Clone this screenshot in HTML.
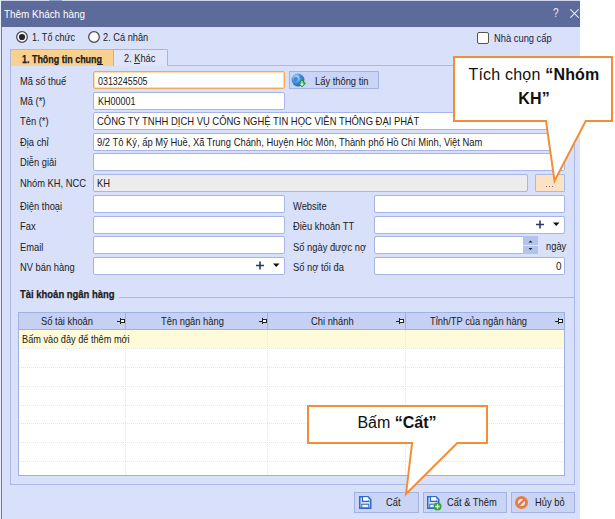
<!DOCTYPE html>
<html><head><meta charset="utf-8">
<style>
html,body{margin:0;padding:0;}
body{width:615px;height:519px;overflow:hidden;position:relative;background:#fff;font-family:"Liberation Sans",sans-serif;}
.a{position:absolute;box-sizing:border-box;}
.t{position:absolute;font-size:11px;line-height:13px;white-space:nowrap;transform-origin:0 0;transform:scaleX(.85);color:#202020;}
.in{position:absolute;box-sizing:border-box;height:18px;background:#fff;border:1px solid #a6b5e6;border-radius:2px;}
.btn{position:absolute;box-sizing:border-box;background:#cad4f5;border:1px solid #a3b2e4;}
</style></head><body>
<!-- top strip -->
<div class="a" style="left:0;top:0;width:580px;height:1px;background:#cfd6ee"></div>
<!-- window -->
<div class="a" style="left:0;top:1px;width:580px;height:518px;background:#d9e0fa"></div>
<div class="a" style="left:1px;top:1px;width:1px;height:518px;background:#6c7bab"></div>
<!-- title bar -->
<div class="a" style="left:1px;top:1px;width:579px;height:26px;background:#5d6b9b"></div>
<div class="a" style="left:0;top:0;width:1px;height:519px;background:#e9ecf9"></div>
<div class="a" style="left:49px;top:0;width:13px;height:1px;background:#8ea3c9"></div>
<div class="t" style="left:4px;top:8px;color:#fff;transform:scaleX(.9)">Thêm Khách hàng</div>
<div class="t" style="left:553px;top:7px;color:#e8ecf8;font-size:12px">?</div>
<svg class="a" style="left:570px;top:9px" width="9" height="9"><path d="M0.3 0.3L8.7 8.7M8.7 0.3L0.3 8.7" stroke="#e6eaf6" stroke-width="1.05"/></svg>

<!-- radios -->
<svg class="a" style="left:16px;top:31px" width="12" height="12"><circle cx="6" cy="6" r="5.3" fill="#fff" stroke="#4d4d4d" stroke-width="1.3"/><circle cx="6" cy="6" r="3.1" fill="#262630"/></svg>
<div class="t" style="left:32px;top:31px;transform:scaleX(.82)">1. Tổ chức</div>
<svg class="a" style="left:88px;top:31px" width="12" height="12"><circle cx="6" cy="6" r="5.3" fill="#fff" stroke="#4d4d4d" stroke-width="1.3"/></svg>
<div class="t" style="left:103px;top:31px;transform:scaleX(.84)">2. Cá nhân</div>
<div class="a" style="left:477px;top:32px;width:12px;height:12px;background:#fff;border:1.4px solid #555;border-radius:2px"></div>
<div class="t" style="left:494px;top:32px;color:#1d1d3a">Nhà cung cấp</div>

<!-- tabs -->
<div class="a" style="left:10px;top:49px;width:103px;height:17px;background:#f8d18f;border-top:1px solid #a9b8e6;border-left:1px solid #a9b8e6"></div>
<div class="t" style="left:22px;top:53px;font-weight:bold;transform:scaleX(.813);-webkit-text-stroke:.25px #202020">1. Thông tin chung</div>
<div class="a" style="left:113px;top:49px;width:55px;height:17px;background:#e0e5fa;border:1px solid #a3b3e4;border-bottom:none;border-top-right-radius:2px"></div>
<div class="t" style="left:124px;top:52px;transform:scaleX(.84)">2. Khác</div>
<div class="a" style="left:134px;top:63px;width:6px;height:1px;background:#333"></div>
<div class="a" style="left:97px;top:64px;width:6px;height:1px;background:#222"></div>

<!-- panel -->
<div class="a" style="left:10px;top:65px;width:565px;height:420px;border:1px solid #a9b8e6;border-top:none"></div>
<div class="a" style="left:168px;top:65px;width:407px;height:1px;background:#a9b8e6"></div>

<!-- labels -->
<div class="t" style="left:20px;top:75px">Mã số thuế</div>
<div class="t" style="left:20px;top:95px">Mã (*)</div>
<div class="t" style="left:20px;top:115px">Tên (*)</div>
<div class="t" style="left:20px;top:136px">Địa chỉ</div>
<div class="t" style="left:20px;top:156px">Diễn giải</div>
<div class="t" style="left:20px;top:177px">Nhóm KH, NCC</div>
<div class="t" style="left:20px;top:200px">Điện thoại</div>
<div class="t" style="left:20px;top:220px">Fax</div>
<div class="t" style="left:20px;top:241px">Email</div>
<div class="t" style="left:20px;top:261px">NV bán hàng</div>
<div class="t" style="left:293px;top:200px">Website</div>
<div class="t" style="left:293px;top:220px">Điều khoản TT</div>
<div class="t" style="left:293px;top:241px">Số ngày được nợ</div>
<div class="t" style="left:293px;top:261px">Số nợ tối đa</div>

<!-- inputs -->
<div class="in" style="left:93px;top:71px;width:192px;border-color:#f2ab55;box-shadow:inset 0 0 0 1px #fcdcaa"></div>
<div class="t" style="left:98px;top:75px;transform:scaleX(.81)">0313245505</div>
<div class="btn" style="left:289px;top:71px;width:90px;height:18px"></div>
<svg class="a" style="left:291px;top:73px" width="16" height="16">
 <defs><radialGradient id="g1" cx="0.38" cy="0.32" r="0.75"><stop offset="0" stop-color="#cdeeff"/><stop offset="0.45" stop-color="#4a9be0"/><stop offset="1" stop-color="#1d56b0"/></radialGradient></defs>
 <circle cx="7" cy="7" r="6.4" fill="url(#g1)"/>
 <path d="M3 4.5Q5 3 6.5 4.5T5.5 8Q3.5 9 2.8 7Z" fill="#2a6cc0" opacity=".7"/>
 <path d="M8 2.5Q10.5 2.5 11.5 4.5L9.5 5.5Z" fill="#2a6cc0" opacity=".6"/>
 <path d="M11 6.8L14.6 10.4L11 14L7.4 10.4Z" fill="#2eab3c" stroke="#1f8a2c" stroke-width=".6"/>
 <path d="M11 8.3V12M9.6 10.8L11 12.3L12.4 10.8" stroke="#eaffea" stroke-width="1.1" fill="none"/>
</svg>
<div class="t" style="left:315px;top:75px">Lấy thông tin</div>

<div class="in" style="left:93px;top:92px;width:192px"></div>
<div class="t" style="left:98px;top:95px;transform:scaleX(.815)">KH00001</div>
<div class="in" style="left:93px;top:112px;width:472px"></div>
<div class="t" style="left:97px;top:115px;transform:scaleX(.858)">CÔNG TY TNHH DỊCH VỤ CÔNG NGHỆ TIN HỌC VIỄN THÔNG ĐẠI PHÁT</div>
<div class="in" style="left:93px;top:133px;width:472px"></div>
<div class="t" style="left:97px;top:136px;transform:scaleX(.854)">9/2 Tô Ký, ấp Mỹ Huề, Xã Trung Chánh, Huyện Hóc Môn, Thành phố Hồ Chí Minh, Việt Nam</div>
<div class="in" style="left:93px;top:153px;width:472px"></div>
<div class="in" style="left:93px;top:174px;width:435px;background:#ececec"></div>
<div class="t" style="left:97px;top:177px">KH</div>
<div class="a" style="left:535px;top:174px;width:30px;height:18px;background:#fae3c2;border:1px solid #a9b8e6;border-radius:1px"></div>
<div class="a" style="left:546px;top:186px;width:1px;height:1px;background:#8a5a8a"></div><div class="a" style="left:549px;top:186px;width:1px;height:1px;background:#8a5a8a"></div><div class="a" style="left:552px;top:186px;width:1px;height:1px;background:#8a5a8a"></div>

<div class="in" style="left:93px;top:195px;width:192px"></div>
<div class="in" style="left:93px;top:216px;width:192px"></div>
<div class="in" style="left:93px;top:236px;width:192px"></div>
<div class="in" style="left:93px;top:257px;width:192px"></div>
<svg class="a" style="left:256px;top:261px" width="25" height="9"><path d="M4 0.5V8.5M0 4.5H8" stroke="#2a3a6a" stroke-width="1.6"/><path d="M17 2.5H23.5L20.25 6Z" fill="#111"/></svg>

<div class="in" style="left:374px;top:195px;width:191px"></div>
<div class="in" style="left:374px;top:216px;width:191px"></div>
<svg class="a" style="left:536px;top:220px" width="25" height="9"><path d="M4 0.5V8.5M0 4.5H8" stroke="#2a3a6a" stroke-width="1.6"/><path d="M17 2.5H23.5L20.25 6Z" fill="#111"/></svg>
<div class="in" style="left:374px;top:236px;width:164px"></div>
<div class="a" style="left:523px;top:236px;width:15px;height:18px;background:#b3c4ea"></div>
<div class="a" style="left:523px;top:245px;width:15px;height:1px;background:#dfe6f9"></div>
<svg class="a" style="left:527px;top:239px" width="7" height="13"><path d="M1.5 3.5H5.5L3.5 1.5Z" fill="#1a1a2a"/><path d="M1.5 9H5.5L3.5 11Z" fill="#1a1a2a"/></svg>
<div class="t" style="left:546px;top:240px">ngày</div>
<div class="in" style="left:374px;top:257px;width:191px"></div>
<div class="t" style="left:556px;top:260px;transform:scaleX(.9)">0</div>

<!-- group -->
<div class="t" style="left:20px;top:288px;font-weight:bold;transform:scaleX(.86);-webkit-text-stroke:.25px #202020">Tài khoản ngân hàng</div>
<div class="a" style="left:119px;top:297px;width:455px;height:1px;background:#a9b8e6"></div>

<!-- grid -->
<div class="a" style="left:18px;top:312px;width:547px;height:164px;background:#fff;border:1px solid #9fb0e2"></div>
<div class="a" style="left:19px;top:313px;width:545px;height:17px;background:#c5d0f3;border-bottom:1px solid #9fb0e2"></div>
<div class="a" style="left:19px;top:330px;width:545px;height:18px;background:#fffbd9"></div>
<div id="rows"></div>
<div class="a" style="left:125px;top:313px;width:1px;height:17px;background:#9fb0e2"></div>
<div class="a" style="left:267px;top:313px;width:1px;height:17px;background:#9fb0e2"></div>
<div class="a" style="left:405px;top:313px;width:1px;height:17px;background:#9fb0e2"></div>
<div class="a" style="left:125px;top:330px;width:1px;height:145px;background:repeating-linear-gradient(180deg,#e6e6e6 0 1px,transparent 1px 2px)"></div>
<div class="a" style="left:267px;top:330px;width:1px;height:145px;background:repeating-linear-gradient(180deg,#e6e6e6 0 1px,transparent 1px 2px)"></div>
<div class="a" style="left:405px;top:330px;width:1px;height:145px;background:repeating-linear-gradient(180deg,#e6e6e6 0 1px,transparent 1px 2px)"></div>
<div class="a" style="left:19px;top:348px;width:545px;height:1px;background:repeating-linear-gradient(90deg,#e6e6e6 0 1px,transparent 1px 2px)"></div>
<div class="a" style="left:19px;top:367px;width:545px;height:1px;background:repeating-linear-gradient(90deg,#e6e6e6 0 1px,transparent 1px 2px)"></div>
<div class="a" style="left:19px;top:386px;width:545px;height:1px;background:repeating-linear-gradient(90deg,#e6e6e6 0 1px,transparent 1px 2px)"></div>
<div class="a" style="left:19px;top:405px;width:545px;height:1px;background:repeating-linear-gradient(90deg,#e6e6e6 0 1px,transparent 1px 2px)"></div>
<div class="a" style="left:19px;top:423px;width:545px;height:1px;background:repeating-linear-gradient(90deg,#e6e6e6 0 1px,transparent 1px 2px)"></div>
<div class="a" style="left:19px;top:442px;width:545px;height:1px;background:repeating-linear-gradient(90deg,#e6e6e6 0 1px,transparent 1px 2px)"></div>
<div class="a" style="left:19px;top:461px;width:545px;height:1px;background:repeating-linear-gradient(90deg,#e6e6e6 0 1px,transparent 1px 2px)"></div>
<div class="t" style="left:41px;top:315px">Số tài khoản</div>
<div class="t" style="left:161px;top:315px">Tên ngân hàng</div>
<div class="t" style="left:311px;top:315px">Chi nhánh</div>
<div class="t" style="left:430px;top:315px">Tỉnh/TP của ngân hàng</div>
<svg class="a" style="left:116px;top:317px" width="10" height="8"><path d="M1 4.5H4M4.5 1V7" stroke="#222" stroke-width="1" fill="none"/><rect x="4.5" y="2.5" width="4" height="3" fill="#fff" stroke="#222" stroke-width="1"/></svg>
<svg class="a" style="left:258px;top:317px" width="10" height="8"><path d="M1 4.5H4M4.5 1V7" stroke="#222" stroke-width="1" fill="none"/><rect x="4.5" y="2.5" width="4" height="3" fill="#fff" stroke="#222" stroke-width="1"/></svg>
<svg class="a" style="left:395px;top:317px" width="10" height="8"><path d="M1 4.5H4M4.5 1V7" stroke="#222" stroke-width="1" fill="none"/><rect x="4.5" y="2.5" width="4" height="3" fill="#fff" stroke="#222" stroke-width="1"/></svg>
<svg class="a" style="left:554px;top:317px" width="10" height="8"><path d="M1 4.5H4M4.5 1V7" stroke="#222" stroke-width="1" fill="none"/><rect x="4.5" y="2.5" width="4" height="3" fill="#fff" stroke="#222" stroke-width="1"/></svg>
<div class="t" style="left:22px;top:333px;transform:scaleX(.835)">Bấm vào đây để thêm mới</div>

<!-- buttons -->
<div class="btn" style="left:354px;top:492px;width:65px;height:21px"></div>
<div class="t" style="left:386px;top:496px">Cất</div>
<div class="btn" style="left:423px;top:492px;width:84px;height:21px"></div>
<div class="t" style="left:447px;top:496px">Cất &amp; Thêm</div>
<div class="btn" style="left:511px;top:492px;width:64px;height:21px"></div>
<div class="t" style="left:535px;top:496px">Hủy bỏ</div>
<svg class="a" style="left:358px;top:495px" width="15" height="15"><path d="M1.75 1.75H10L12.75 4.5V13.25H1.75Z" fill="#d6def8" stroke="#2f6bc9" stroke-width="1.5"/><path d="M4.5 1.5V6.25H11.5" fill="none" stroke="#2f6bc9" stroke-width="1.3"/><rect x="5.2" y="2.2" width="4.6" height="3.3" fill="#fff"/><rect x="3.75" y="9.25" width="7" height="3.5" fill="#eef2ff" stroke="#2f6bc9" stroke-width="1"/></svg>
<svg class="a" style="left:426px;top:495px" width="16" height="16"><path d="M1.75 1.75H10L12.75 4.5V13.25H1.75Z" fill="#d6def8" stroke="#2f6bc9" stroke-width="1.5"/><path d="M4.5 1.5V6.25H11.5" fill="none" stroke="#2f6bc9" stroke-width="1.3"/><rect x="5.2" y="2.2" width="4.6" height="3.3" fill="#fff"/><rect x="3.75" y="9.25" width="5" height="3.5" fill="#eef2ff" stroke="#2f6bc9" stroke-width="1"/><circle cx="11.5" cy="11.5" r="4" fill="#2ea83a"/><path d="M11.5 9.3V13.7M9.3 11.5H13.7" stroke="#dff5df" stroke-width="1.3"/></svg>
<svg class="a" style="left:515px;top:496px" width="13" height="13"><circle cx="6.5" cy="6.5" r="6.5" fill="#e77c45"/><circle cx="6.5" cy="6.5" r="3.5" fill="#e6f0ff"/><path d="M2.8 10.2L10.2 2.8" stroke="#e77c45" stroke-width="2.4"/></svg>

<!-- callouts -->
<svg class="a" style="left:0;top:0" width="615" height="519">
 <path d="M454 57H612V121H585.7L554.5 181L546 121H454Z" fill="#fff" stroke="#f38e38" stroke-width="2" stroke-linejoin="miter"/>
 <path d="M308 406H487V443H457.3L406 494L412.1 443H308Z" fill="#fff" stroke="#f38e38" stroke-width="2" stroke-linejoin="miter"/>
</svg>
<div class="a" style="left:454px;top:63px;width:160px;text-align:center;font-size:16px;line-height:24px;color:#111;letter-spacing:.2px">Tích chọn <b>“Nhóm</b><br><b>KH”</b></div>
<div class="a" style="left:307px;top:411px;width:180px;text-align:center;font-size:16px;line-height:24px;color:#111">Bấm <b>“Cất”</b></div>
</body></html>
